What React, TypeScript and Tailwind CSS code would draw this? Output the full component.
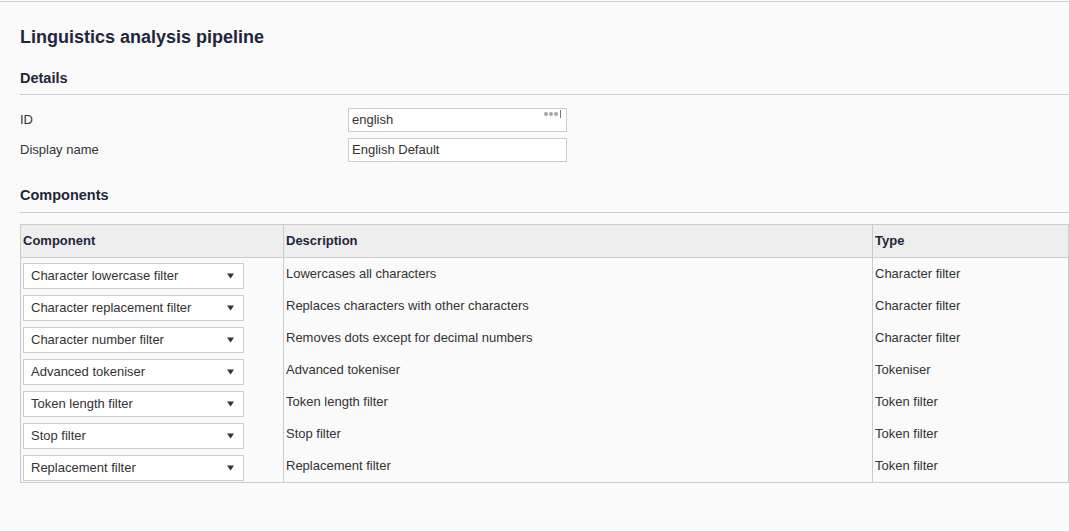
import React from 'react'

// Pipeline components shown in the table
const rows = [
  { name: 'Character lowercase filter', desc: 'Lowercases all characters', type: 'Character filter' },
  { name: 'Character replacement filter', desc: 'Replaces characters with other characters', type: 'Character filter' },
  { name: 'Character number filter', desc: 'Removes dots except for decimal numbers', type: 'Character filter' },
  { name: 'Advanced tokeniser', desc: 'Advanced tokeniser', type: 'Tokeniser' },
  { name: 'Token length filter', desc: 'Token length filter', type: 'Token filter' },
  { name: 'Stop filter', desc: 'Stop filter', type: 'Token filter' },
  { name: 'Replacement filter', desc: 'Replacement filter', type: 'Token filter' },
]

function Caret() {
  return (
    <svg width="7" height="6" viewBox="0 0 7 6" className="shrink-0">
      <path d="M0 0.5 H7 L3.5 5.5 Z" fill="#333" />
    </svg>
  )
}

function Select({ value }: { value: string }) {
  return (
    <div className="mt-[5px] flex h-[26px] w-[221px] items-center justify-between border border-[#ccc] bg-white pl-[7px] pr-[9px] text-[13px] text-[#333]">
      <span>{value}</span>
      <Caret />
    </div>
  )
}

function Field({ label, value, dots }: { label: string; value: string; dots?: boolean }) {
  return (
    <div className="flex items-center">
      <div className="w-[328px] text-[13px] text-[#333]">{label}</div>
      <div className="relative flex h-[24px] w-[219px] items-center border border-[#ccc] bg-white pl-[3px] text-[13px] text-[#333]">
        {value}
        {dots && (
          <div className="absolute right-[5px] top-[1px] flex h-[8px] items-center gap-px">
            <span className="h-[4px] w-[4px] rounded-full bg-[#a5a5a5]" />
            <span className="h-[4px] w-[4px] rounded-full bg-[#a5a5a5]" />
            <span className="h-[4px] w-[4px] rounded-full bg-[#a5a5a5]" />
            <span className="ml-[1px] h-[8px] w-px bg-[#777]" />
          </div>
        )}
      </div>
    </div>
  )
}

export default function App() {
  return (
    <div className="min-h-[531px] bg-[#fafafa] font-['Liberation_Sans',Arial,sans-serif]">
      <div className="pt-px">
        <div className="border-t border-[#ccc]" />
      </div>
      <div className="pl-[20px]">
        <h1 className="mt-[25px] text-[18px] font-bold leading-[20px] text-[#22263a]">Linguistics analysis pipeline</h1>

        {/* Details */}
        <h2 className="mt-[22px] border-b border-[#ccc] pb-[7px] text-[14.5px] font-bold leading-[18px] text-[#22263a]">Details</h2>
        <div className="mt-[13px] flex flex-col gap-[6px]">
          <Field label="ID" value="english" dots />
          <Field label="Display name" value="English Default" />
        </div>

        {/* Components */}
        <h2 className="mt-[24px] border-b border-[#ccc] pb-[8px] text-[14.5px] font-bold leading-[18px] text-[#22263a]">Components</h2>
        <div className="mt-[11px] border border-[#ccc] text-[13px] text-[#333]">
          <div className="grid grid-cols-[262px_589px_1fr] border-b border-[#ccc] bg-[#eee] font-bold text-[#22263a]">
            <div className="flex h-[32px] items-center pl-[2px]">Component</div>
            <div className="flex h-[32px] items-center border-l border-[#ccc] pl-[2px]">Description</div>
            <div className="flex h-[32px] items-center border-l border-[#ccc] pl-[2px]">Type</div>
          </div>
          {rows.map((r) => (
            <div key={r.name} className="grid h-[32px] grid-cols-[262px_589px_1fr]">
              <div className="pl-[2px]">
                <Select value={r.name} />
              </div>
              <div className="border-l border-[#ccc] pl-[2px] pt-[7px] leading-[18px]">{r.desc}</div>
              <div className="border-l border-[#ccc] pl-[2px] pt-[7px] leading-[18px]">{r.type}</div>
            </div>
          ))}
        </div>
      </div>
    </div>
  )
}
